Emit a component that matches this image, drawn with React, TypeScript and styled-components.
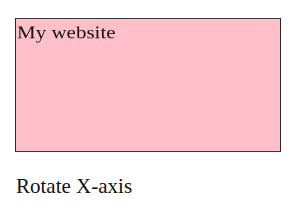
import React from 'react'
import styled, { createGlobalStyle } from 'styled-components'

const GlobalStyle = createGlobalStyle`
  html, body {
    margin: 0;
    padding: 0;
    background: #ffffff;
  }
`

const Page = styled.div`
  display: flex;
  flex-direction: column;
  align-items: flex-start;
  padding: 6px 0 0 15px;
  font-family: 'Liberation Serif', 'Times New Roman', serif;
  color: #111;
`

const RotateBox = styled.div<{ angle: number }>`
  box-sizing: border-box;
  width: 266px;
  height: 158px;
  border: 1px solid #2a2a2a;
  background-color: pink;
  font-size: 21px;
  line-height: 1.15;
  padding: 4px 1px 0;
  transform: rotateX(${({ angle }) => angle}deg);
`

const Label = styled.p`
  margin: 10px 0 0 1px;
  font-size: 21px;
  line-height: 1.15;
`

const App = () => {
  return (
    <>
      <GlobalStyle />
      <Page>
        <RotateBox angle={32}>My website</RotateBox>
        <Label>Rotate X-axis</Label>
      </Page>
    </>
  )
}

export default App
